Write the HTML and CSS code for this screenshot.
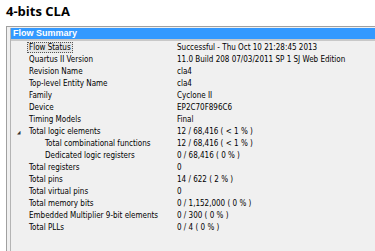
FILE: index.html
```html
<!DOCTYPE html>
<html lang="en">
<head>
    <meta charset="UTF-8">
    <title>4-bits CLA</title>
    <link rel="stylesheet" href="styles.css">
</head>
<body>
    <h1 class="page-title">4-bits CLA</h1>

    <div class="panel">
        <div class="panel-frame">
            <div class="panel-header">Flow Summary</div>
            <div class="summary">
                <div class="row"><span class="label"><span class="focused">Flow Status</span></span><span class="value">Successful - Thu Oct 10 21:28:45 2013</span></div>
                <div class="row"><span class="label">Quartus II Version</span><span class="value">11.0 Build 208 07/03/2011 SP 1 SJ Web Edition</span></div>
                <div class="row"><span class="label">Revision Name</span><span class="value">cla4</span></div>
                <div class="row"><span class="label">Top-level Entity Name</span><span class="value">cla4</span></div>
                <div class="row"><span class="label">Family</span><span class="value">Cyclone II</span></div>
                <div class="row"><span class="label">Device</span><span class="value">EP2C70F896C6</span></div>
                <div class="row"><span class="label">Timing Models</span><span class="value">Final</span></div>
                <div class="row"><span class="label"><span class="toggle">&#9698;</span>Total logic elements</span><span class="value">12 / 68,416 ( &lt; 1 % )</span></div>
                <div class="row"><span class="label sub">Total combinational functions</span><span class="value">12 / 68,416 ( &lt; 1 % )</span></div>
                <div class="row"><span class="label sub">Dedicated logic registers</span><span class="value">0 / 68,416 ( 0 % )</span></div>
                <div class="row"><span class="label">Total registers</span><span class="value">0</span></div>
                <div class="row"><span class="label">Total pins</span><span class="value">14 / 622 ( 2 % )</span></div>
                <div class="row"><span class="label">Total virtual pins</span><span class="value">0</span></div>
                <div class="row"><span class="label">Total memory bits</span><span class="value">0 / 1,152,000 ( 0 % )</span></div>
                <div class="row"><span class="label">Embedded Multiplier 9-bit elements</span><span class="value">0 / 300 ( 0 % )</span></div>
                <div class="row"><span class="label">Total PLLs</span><span class="value">0 / 4 ( 0 % )</span></div>
            </div>
        </div>
    </div>
</body>
</html>
```

FILE: styles.css
```css
body {
    margin: 0;
    background: #ffffff;
    font-family: "DejaVu Sans Condensed", "DejaVu Sans", sans-serif;
    overflow: hidden;
}

.page-title {
    margin: 0;
    padding: 3px 0 0 6px;
    height: 24px;
    box-sizing: border-box;
    font-family: "Open Sans", sans-serif;
    font-size: 13px;
    font-weight: bold;
    line-height: 17px;
    color: #000;
}

.panel {
    margin-left: 6px;
    margin-top: 2px;
    border-top: 1px solid #a0a0a0;
    border-left: 1px solid #a0a0a0;
    background: #f0f0f0;
    padding: 1px 0 0 3px;
    height: 223px;
}

.panel-frame {
    border-left: 1px solid #b4b4b4;
    height: 100%;
}

.panel-header {
    background: #3399ff;
    color: #ffffff;
    font-family: "Liberation Sans", sans-serif;
    font-weight: bold;
    font-size: 9px;
    line-height: 11px;
    height: 11px;
    padding-left: 2px;
    border-bottom: 2px solid #c8c8c8;
}

.summary {
    padding-top: 1px;
    font-size: 8px;
    color: #000;
}

.row {
    display: flex;
    height: 12px;
    line-height: 12px;
    white-space: nowrap;
}

.label {
    width: 148px;
    padding-left: 18px;
    position: relative;
}

.label.sub {
    width: 132px;
    padding-left: 34px;
}

.toggle {
    position: absolute;
    left: 6px;
    font-size: 5px;
    color: #333;
}

.focused {
    margin-left: -2px;
    padding: 0 1px;
    background: #e4e4e4;
    border: 1px dotted #555;
}

.value {
    flex: 1;
}
```
